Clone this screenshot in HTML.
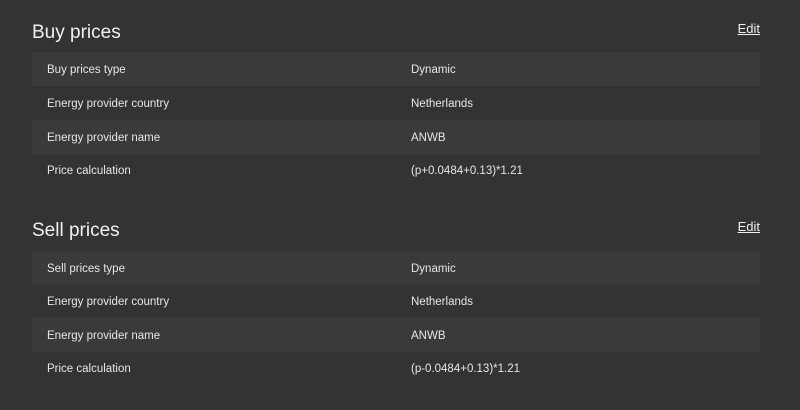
<!DOCTYPE html>
<html><head><style>
body{margin:0;width:800px;height:410px;background:#333;font-family:"Liberation Sans",sans-serif;color:#e6e6e6;overflow:hidden;position:relative}
.sec{position:absolute;left:32px;width:728px}
h2{position:absolute;left:0;margin:0;font-weight:normal;font-size:19px;color:#f0f0f0;line-height:24px}
a{position:absolute;right:0;color:#eee;font-size:13px;text-decoration:underline;line-height:16px}
.row{position:absolute;left:0;width:728px;height:34px;font-size:11.5px;line-height:36px}
.row.s{background:#3a3a3a}
.row span{position:absolute;left:15px}
.row b{position:absolute;left:379px;font-weight:normal}
</style></head><body>
<div class="sec" style="top:0">
<h2 style="top:21px">Buy prices</h2><a style="top:21px">Edit</a>
<div class="row s" style="top:52px"><span>Buy prices type</span><b>Dynamic</b></div>
<div class="row" style="top:86px"><span>Energy provider country</span><b>Netherlands</b></div>
<div class="row s" style="top:120px"><span>Energy provider name</span><b>ANWB</b></div>
<div class="row" style="top:153px"><span>Price calculation</span><b>(p+0.0484+0.13)*1.21</b></div>
</div>
<div class="sec" style="top:198px">
<h2 style="top:21px">Sell prices</h2><a style="top:21px">Edit</a>
<div class="row s" style="top:53px"><span>Sell prices type</span><b>Dynamic</b></div>
<div class="row" style="top:86px"><span>Energy provider country</span><b>Netherlands</b></div>
<div class="row s" style="top:120px"><span>Energy provider name</span><b>ANWB</b></div>
<div class="row" style="top:153px"><span>Price calculation</span><b>(p-0.0484+0.13)*1.21</b></div>
</div>
</body></html>
